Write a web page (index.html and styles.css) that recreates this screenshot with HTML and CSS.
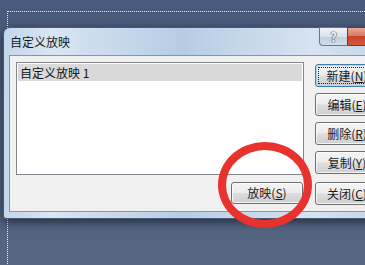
FILE: index.html
```html
<!DOCTYPE html>
<html lang="zh">
<head>
<meta charset="utf-8">
<link rel="stylesheet" href="styles.css">
</head>
<body>
<div class="slide"></div>
<div class="dialog">
  <div class="titlebar">
    <span class="title">自定义放映</span>
    <div class="caption">
      <span class="cap-help">?</span>
      <span class="cap-close"></span>
    </div>
  </div>
  <div class="client">
    <div class="layout">
      <div class="listbox">
        <div class="item">自定义放映 1</div>
      </div>
      <div class="side">
        <button class="btn default">新建(<u>N</u>)</button>
        <button class="btn">编辑(<u>E</u>)</button>
        <button class="btn">删除(<u>R</u>)</button>
        <button class="btn">复制(<u>Y</u>)</button>
      </div>
      <button class="btn play">放映(<u>S</u>)</button>
      <button class="btn">关闭(<u>C</u>)</button>
    </div>
  </div>
</div>
<div class="ring"></div>
</body>
</html>
```
FILE: styles.css
```css
html, body {
  margin: 0;
  padding: 0;
}
body {
  width: 365px;
  height: 265px;
  overflow: hidden;
  position: relative;
  background: linear-gradient(to bottom, #48597a 0%, #4f5f7e 40%, #56657f 100%);
  font-family: "Noto Sans CJK SC", "Noto Sans", sans-serif;
}
.slide {
  margin: 11px 0 0 7px;
  height: 260px;
  border-top: 1px dotted #e6e9ef;
  border-left: 1px dotted #e6e9ef;
}
.dialog {
  position: absolute;
  left: 3px;
  top: 27px;
  width: 398px;
  height: 192px;
  box-sizing: border-box;
  border: 1px solid #4a5a74;
  border-radius: 7px 7px 3px 3px;
  background: linear-gradient(to right, #c3d6ea 0%, #d9e6f3 12%, #c8d9ec 28%, #b7cce4 45%, #c6d7ea 60%, #d6e3f1 78%, #bfd2e8 100%);
  box-shadow: 0 3px 10px rgba(10, 18, 35, 0.7);
  display: flex;
  flex-direction: column;
}
.titlebar {
  height: 27px;
  display: flex;
  justify-content: space-between;
  align-items: flex-start;
}
.title {
  font-size: 12px;
  line-height: 14px;
  color: #1a1a1a;
  margin: 7px 0 0 6px;
}
.caption {
  display: flex;
  margin: -1px 6px 0 0;
}
.cap-help {
  width: 28px;
  height: 19px;
  box-sizing: border-box;
  border: 1px solid #6a7890;
  border-right: none;
  border-radius: 0 0 0 4px;
  background: linear-gradient(to bottom, #eef2f7 0%, #d9e2ec 50%, #c2cfdd 51%, #cfdbe7 100%);
  font-size: 13px;
  line-height: 17px;
  font-weight: bold;
  text-align: center;
  color: #f4f6f9;
  text-shadow: 0 0 1px #3a4352, 0 0 1px #3a4352, 0 0 1px #3a4352;
}
.cap-close {
  width: 47px;
  height: 19px;
  box-sizing: border-box;
  border: 1px solid #6a3a34;
  border-radius: 0 0 4px 0;
  background: linear-gradient(to bottom, #e9a797 0%, #dc7a62 45%, #c8422b 50%, #d65a3e 100%);
}
.client {
  margin: 0 6px 6px 5px;
  flex: 1;
  background: #f0f0f0;
  border: 1px solid #8296b0;
  padding: 6px 0 0 6px;
}
.layout {
  display: grid;
  grid-template-columns: 288px 64px;
  column-gap: 11px;
  row-gap: 7px;
}
.listbox {
  height: 113px;
  box-sizing: border-box;
  border: 1px solid #828790;
  background: #ffffff;
  padding: 1px;
}
.item {
  height: 17px;
  background: #dadada;
  font-size: 12px;
  line-height: 17px;
  padding-left: 2px;
  color: #111;
}
.side {
  display: flex;
  flex-direction: column;
  gap: 6px;
  padding-top: 2px;
}
.btn {
  height: 23px;
  width: 64px;
  box-sizing: border-box;
  border: 1px solid #707070;
  border-radius: 3px;
  background: linear-gradient(to bottom, #f4f4f4 0%, #ececec 48%, #dddddd 52%, #d0d0d0 100%);
  box-shadow: inset 0 0 0 1px rgba(255, 255, 255, 0.75);
  font-family: "Noto Sans CJK SC", "Noto Sans", sans-serif;
  font-size: 12px;
  line-height: 20px;
  color: #1a1a1a;
  padding: 0;
  text-align: center;
  white-space: nowrap;
}
.btn u {
  text-decoration-thickness: 1px;
  text-underline-offset: 1px;
}
.btn.default {
  border-color: #3c7fb1;
  box-shadow: inset 0 0 0 1px #a8d8f2;
  outline: 1px dotted #222;
  outline-offset: -4px;
}
.btn.play {
  width: 72px;
  justify-self: end;
  margin-right: 1px;
  height: 22px;
}
.ring {
  position: absolute;
  left: 218px;
  top: 142px;
  width: 94px;
  height: 86px;
  box-sizing: border-box;
  border: 8px solid #e8322e;
  border-radius: 50%;
}
```
